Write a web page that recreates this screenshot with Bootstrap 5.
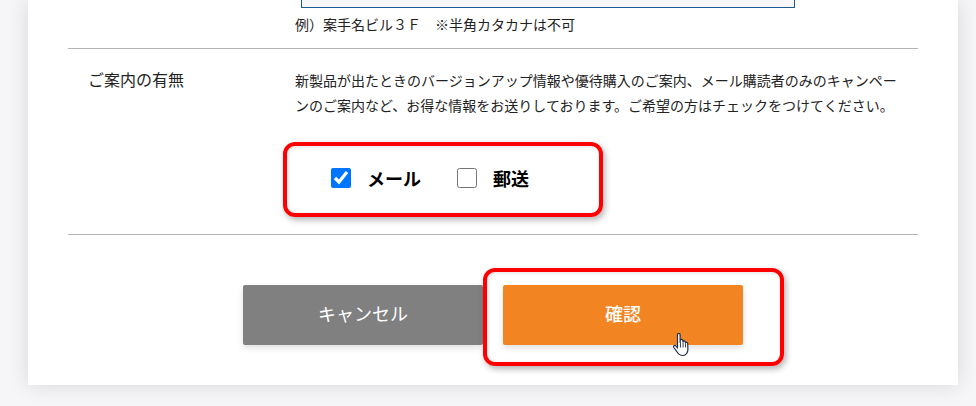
<!DOCTYPE html>
<html lang="ja">
<head>
<meta charset="utf-8">
<title>ご案内の有無</title>
<link href="https://cdn.jsdelivr.net/npm/bootstrap@5.3.0/dist/css/bootstrap.min.css" rel="stylesheet">
<style>
html, body { height: 406px; overflow: hidden; }
body { background: #f6f6f8; font-family: "Noto Sans CJK JP", "Liberation Sans", sans-serif; color: #222; }
.sheet { width: 930px; height: 385px; margin-left: 28px; background: #fff; box-shadow: 0 0 20px rgba(0,0,0,.13); padding: 0 40px; position: relative; }
.field-stub { width: 494px; height: 8px; margin-left: 233px; background: #f7f7f9; border: 1px solid #1d5a94; border-top: 0; }
.field-note { margin: 6px 0 0 227px; font-size: 14px; line-height: 21px; height: 34px; }
.rule-line { height: 1px; background: #b4b4b4; }
.info-row { height: 185px; }
.info-label { width: 227px; padding: 18px 0 0 20px; font-size: 16px; line-height: 24px; }
.info-text { width: 610px; padding-top: 19px; font-size: 14px; line-height: 25px; }
.check-group { gap: 36px; padding: 0 0 4px 44px; }
.check-item { gap: 16px; font-size: 18px; font-weight: 700; color: #000; line-height: 1; }
.native-check { width: 20px; height: 20px; margin: 0; accent-color: #0075ff; }
.btn-row { padding-top: 50px; gap: 20px; margin-left: 175px; }
.act-btn { width: 240px; height: 60px; border: 0; border-radius: 2px; color: #fff; font-size: 18px; padding: 0 0 4px; box-shadow: 0 3px 6px rgba(0,0,0,.12); }
.act-cancel, .act-cancel:hover, .act-cancel:active { background: #808080; color: #fff; }
.act-confirm, .act-confirm:hover, .act-confirm:active { background: #f28522; color: #fff; font-weight: 500; }
.mark-box { position: absolute; border: 4px solid #f00; border-radius: 12px; box-shadow: 2px 3px 6px rgba(0,0,0,.3), inset 1px 1px 4px rgba(0,0,0,.12); }
.mark-check { left: 255px; top: 142px; width: 320px; height: 75px; }
.mark-btn { left: 455px; top: 268px; width: 301px; height: 98px; pointer-events: none; }
.hand-cursor { position: absolute; left: 644px; top: 333px; width: 18px; height: 24px; }
</style>
</head>
<body>
<div class="sheet">
  <div class="field-stub"></div>
  <p class="field-note">例）案手名ビル３Ｆ　※半角カタカナは不可</p>
  <div class="rule-line"></div>
  <div class="info-row d-flex">
    <div class="info-label">ご案内の有無</div>
    <div class="info-text">
      新製品が出たときのバージョンアップ情報や優待購入のご案内、メール購読者のみのキャンペーンのご案内など、お得な情報をお送りしております。ご希望の方はチェックをつけてください。
    </div>
  </div>
  <div class="rule-line"></div>
  <div class="btn-row d-flex">
    <button type="button" class="btn act-btn act-cancel">キャンセル</button>
    <button type="button" class="btn act-btn act-confirm">確認</button>
  </div>
  <div class="mark-box mark-check d-flex align-items-center">
    <div class="check-group d-flex">
      <label class="check-item d-flex align-items-center"><input class="native-check" type="checkbox" checked>メール</label>
      <label class="check-item d-flex align-items-center"><input class="native-check" type="checkbox">郵送</label>
    </div>
  </div>
  <div class="mark-box mark-btn"></div>
  <svg class="hand-cursor" viewBox="1.5 .5 16 24" aria-hidden="true">
    <path d="M6 2.200c0-1.600 2.600-1.600 2.600 0V10l.2-2.200c.2-1.400 2.400-1.300 2.500.1l.1 1.400c.2-1.300 2.300-1.200 2.400.2l.1 1c.3-1.200 2.200-1 2.300.4l.2 5.500c.1 3.500-1.800 6.600-5 6.600-3.300 0-4.600-1.500-6-3.800L2.300 15c-.9-1.500 1-2.800 2.100-1.500L6 15.500z" fill="#fff" stroke="#22304f" stroke-width="1.200" stroke-linejoin="round"/>
    <path d="M9 10v5M11.600 10v5M14 11v4" stroke="#22304f" stroke-width=".9" fill="none"/>
  </svg>
</div>
</body>
</html>
